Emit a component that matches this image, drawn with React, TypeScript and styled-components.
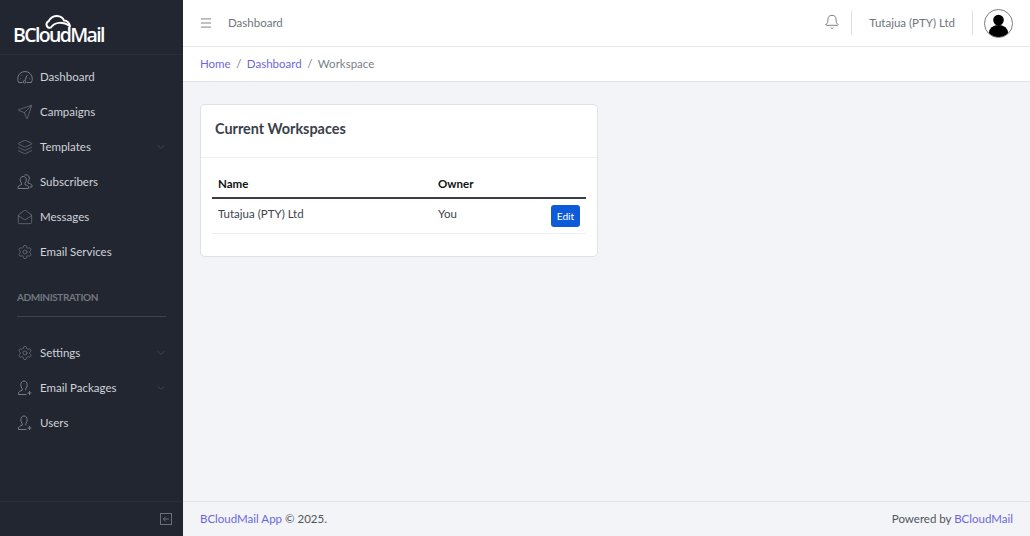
import React from "react";
import styled, { createGlobalStyle } from "styled-components";
import { Bell, ChevronDown, Layers, MailOpen, Menu, Send, Settings } from "lucide-react";

const Global = createGlobalStyle`
  html, body { margin: 0; padding: 0; height: 100%; }
  body {
    font-family: Lato, "Open Sans", sans-serif;
    font-size: 11.5px;
    color: #3d434c;
    background: #f3f4f7;
  }
  #root { height: 100%; }
  * { box-sizing: border-box; }
`;

const Shell = styled.div`
  display: flex;
  height: 536px;
  overflow: hidden;
`;

const Sidebar = styled.aside`
  width: 183px;
  flex: none;
  background: #212631;
  display: flex;
  flex-direction: column;
`;

const Brand = styled.div`
  height: 55px;
  flex: none;
  border-bottom: 1px solid #2a2f3b;
  position: relative;
`;

const BrandText = styled.span`
  position: absolute;
  left: 13px;
  top: 23px;
  font-family: "Open Sans", sans-serif;
  font-weight: 600;
  font-size: 19.5px;
  line-height: 24px;
  letter-spacing: -1.65px;
  color: #fff;
`;

const BrandCloud = styled.svg`
  position: absolute;
  left: 45px;
  top: 15px;
`;

const Nav = styled.nav`
  flex: 1;
  padding-top: 5px;
`;

const Item = styled.div`
  height: 35px;
  display: flex;
  align-items: center;
  padding: 0 16px 2px 17px;
  color: #d0d3d8;
`;

const ItemIcon = styled.span`
  width: 23px;
  display: flex;
  color: #777b83;
`;

const Caret = styled.span`
  margin-left: auto;
  display: flex;
  color: #5f646e;
`;

const SectionTitle = styled.div`
  margin: 19px 17px 0;
  height: 28px;
  border-bottom: 1px solid #3d424d;
  color: #73777f;
  font-size: 10px;
  line-height: 16px;
  font-weight: 700;
  letter-spacing: -0.4px;
`;

const AdminList = styled.div`
  margin-top: 19px;
`;

const SidebarFoot = styled.div`
  height: 35px;
  flex: none;
  border-top: 1px solid #2a2f3b;
  display: flex;
  align-items: center;
  justify-content: flex-end;
  padding-right: 11px;
  color: #6b6f78;
`;

const Main = styled.div`
  flex: 1;
  display: flex;
  flex-direction: column;
  min-width: 0;
`;

const Topbar = styled.header`
  height: 47px;
  flex: none;
  background: #fff;
  border-bottom: 1px solid #e6e7ec;
  display: flex;
  align-items: center;
  padding: 0 17px 0 16px;
  color: #6f747b;
`;

const TopTitle = styled.span`
  margin: -1px 0 0 15px;
`;

const TopRight = styled.div`
  margin-left: auto;
  display: flex;
  align-items: center;
  height: 24px;
`;

const BellWrap = styled.span`
  display: flex;
  padding-right: 11px;
  margin-top: -2px;
  color: #4f545c;
`;

const Company = styled.span`
  border-left: 1px solid #dcdee3;
  border-right: 1px solid #dcdee3;
  height: 24px;
  line-height: 23px;
  padding: 0 17px;
`;

const Avatar = styled.svg`
  margin-left: 11px;
  display: block;
`;

const Crumbs = styled.div`
  height: 35px;
  flex: none;
  background: #fff;
  border-bottom: 1px solid #e0e2e8;
  display: flex;
  align-items: center;
  gap: 5.5px;
  padding: 0 0 1px 17px;
  color: #7b7f86;
`;

const Link = styled.span`
  color: #6e67dc;
`;

const Content = styled.main`
  flex: 1;
  padding: 22px 17px;
`;

const Card = styled.section`
  width: 398px;
  height: 153px;
  background: #fff;
  border: 1px solid #dfe1e6;
  border-radius: 5px;
`;

const CardHead = styled.div`
  height: 53px;
  border-bottom: 1px solid #eff0f3;
  display: flex;
  align-items: center;
  padding: 0 0 6px 14px;
  font-size: 14.4px;
  font-weight: 700;
  color: #3a404b;
`;

const CardBody = styled.div`
  padding: 12px 11px 0;
`;

const Table = styled.table`
  width: 100%;
  border-collapse: collapse;
  table-layout: fixed;
  font-size: inherit;
`;

const Th = styled.th`
  height: 28px;
  text-align: left;
  padding: 0 6px;
  font-weight: 700;
  color: #111;
  border-bottom: 2px solid #3a3d44;
`;

const Td = styled.td`
  height: 35px;
  padding: 0 6px 4px;
  color: #3d434c;
  border-bottom: 1px solid #eceef1;
`;

const ActionTd = styled(Td)`
  padding: 0 6px;
  text-align: right;
`;

const EditButton = styled.button`
  width: 29px;
  height: 22px;
  padding: 0;
  border: none;
  border-radius: 3px;
  background: #0d5bd9;
  color: #fff;
  font: inherit;
  font-size: 10.2px;
`;

const Footer = styled.footer`
  height: 35px;
  flex: none;
  border-top: 1px solid #e0e2e8;
  display: flex;
  align-items: center;
  justify-content: space-between;
  padding: 0 17px 1px;
  color: #4f545c;
`;

const UserPlus = () => (
  <svg width="16" height="16" viewBox="0 0 16 16" fill="none" stroke="currentColor" strokeWidth="1">
    <path d="M7 1c-2 0-3.200 1.500-3.200 3.800 0 1.600.6 3 1.400 3.800v1.700c-1.900.5-3.700 1.300-3.700 2.600v1.600h8" />
    <path d="M7 1c2 0 3.200 1.500 3.200 3.800 0 1.600-.6 3-1.400 3.800v1.700" />
    <path d="M10.500 13h4M12.500 11v4" />
  </svg>
);

const TwoUsers = () => (
  <svg width="16" height="16" viewBox="0 0 16 16" fill="none" stroke="currentColor" strokeWidth="1">
    <path d="M6.200 2.500c-1.900 0-3 1.400-3 3.300 0 1.400.5 2.600 1.300 3.300v1.600C2.700 11.200 1 12 1 13.100v1.400h10.500v-1.400c0-1.100-1.700-1.900-3.500-2.400V9.100c.8-.7 1.300-1.900 1.300-3.300 0-1.900-1.200-3.300-3.100-3.300z" />
    <path d="M7.500 1.200C8 1 8.500.9 9.200.9c1.900 0 3.100 1.400 3.100 3.300 0 1.400-.5 2.600-1.300 3.300v1.600c1.800.5 4 1.200 4 2.400v1.500h-2.500" />
  </svg>
);

const CollapseIcon = () => (
  <svg width="12" height="12" viewBox="0 0 12 12" fill="none" stroke="currentColor" strokeWidth="1">
    <rect x=".5" y=".5" width="11" height="11" />
    <path d="M9 6H3.500M5.500 3.800 3.300 6l2.200 2.200" />
  </svg>
);

const Gauge = () => (
  <svg width="16" height="16" viewBox="0 0 16 16" fill="none" stroke="currentColor" strokeWidth="1">
    <path d="M5.500 13.500H1.700C1 12.300.7 11 .7 9.800a7.300 7.300 0 0 1 14.600 0c0 1.200-.3 2.500-1 3.700H9.500" />
    <circle cx="7.500" cy="12.800" r="1.300" />
    <path d="M8 11.500 9.800 6.500M3 9.800h.8M12.300 9.800h.8M4.500 6l.6.6M11.200 6l-.6.6" />
  </svg>
);

type NavEntry = { label: string; icon: React.ReactNode; caret?: boolean };

const topItems: NavEntry[] = [
  { label: "Dashboard", icon: <Gauge /> },
  { label: "Campaigns", icon: <Send size={16} strokeWidth={1} /> },
  { label: "Templates", icon: <Layers size={16} strokeWidth={1} />, caret: true },
  { label: "Subscribers", icon: <TwoUsers /> },
  { label: "Messages", icon: <MailOpen size={16} strokeWidth={1} /> },
  { label: "Email Services", icon: <Settings size={16} strokeWidth={1} /> },
];

const adminItems: NavEntry[] = [
  { label: "Settings", icon: <Settings size={16} strokeWidth={1} />, caret: true },
  { label: "Email Packages", icon: <UserPlus />, caret: true },
  { label: "Users", icon: <UserPlus /> },
];

const NavRow = ({ label, icon, caret }: NavEntry) => (
  <Item>
    <ItemIcon>{icon}</ItemIcon>
    {label}
    {caret && (
      <Caret>
        <ChevronDown size={12} strokeWidth={1} />
      </Caret>
    )}
  </Item>
);

export default function App() {
  return (
    <>
      <Global />
      <Shell>
        <Sidebar>
          <Brand>
            <BrandCloud width="27" height="14" viewBox="0 0 27 14" fill="none" stroke="#fff" strokeWidth="2">
              <path d="M5.500 13C1.200 13 0 7.800 3.800 6 4.800 3 8.500.8 12 1c3.500.2 6 2 7 4.500 3 0 5.800 2.500 6 6.500" />
              <path d="M5.500 13C9 7.500 17 5.500 25 11" />
            </BrandCloud>
            <BrandText>BCloudMail</BrandText>
          </Brand>
          <Nav>
            {topItems.map((item) => (
              <NavRow key={item.label} {...item} />
            ))}
            <SectionTitle>ADMINISTRATION</SectionTitle>
            <AdminList>
              {adminItems.map((item) => (
                <NavRow key={item.label} {...item} />
              ))}
            </AdminList>
          </Nav>
          <SidebarFoot>
            <CollapseIcon />
          </SidebarFoot>
        </Sidebar>
        <Main>
          <Topbar>
            <Menu size={14} strokeWidth={1.500} />
            <TopTitle>Dashboard</TopTitle>
            <TopRight>
              <BellWrap>
                <Bell size={16} strokeWidth={1.100} />
              </BellWrap>
              <Company>Tutajua (PTY) Ltd</Company>
              <Avatar width="29" height="29" viewBox="0 0 30 30">
                <circle cx="15" cy="15" r="14.500" fill="#fff" stroke="#777" />
                <clipPath id="avatarClip">
                  <circle cx="15" cy="15" r="14" />
                </clipPath>
                <g clipPath="url(#avatarClip)">
                  <circle cx="15" cy="11.500" r="5.500" fill="#000" />
                  <ellipse cx="15" cy="25" rx="10" ry="8.500" fill="#000" />
                </g>
              </Avatar>
            </TopRight>
          </Topbar>
          <Crumbs>
            <Link>Home</Link>
            <span>/</span>
            <Link>Dashboard</Link>
            <span>/</span>
            <span>Workspace</span>
          </Crumbs>
          <Content>
            <Card>
              <CardHead>Current Workspaces</CardHead>
              <CardBody>
                <Table>
                  <colgroup>
                    <col width="220" />
                    <col width="100" />
                    <col />
                  </colgroup>
                  <thead>
                    <tr>
                      <Th>Name</Th>
                      <Th>Owner</Th>
                      <Th />
                    </tr>
                  </thead>
                  <tbody>
                    <tr>
                      <Td>Tutajua (PTY) Ltd</Td>
                      <Td>You</Td>
                      <ActionTd>
                        <EditButton>Edit</EditButton>
                      </ActionTd>
                    </tr>
                  </tbody>
                </Table>
              </CardBody>
            </Card>
          </Content>
          <Footer>
            <span>
              <Link>BCloudMail App</Link> © 2025.
            </span>
            <span>
              Powered by <Link>BCloudMail</Link>
            </span>
          </Footer>
        </Main>
      </Shell>
    </>
  );
}
